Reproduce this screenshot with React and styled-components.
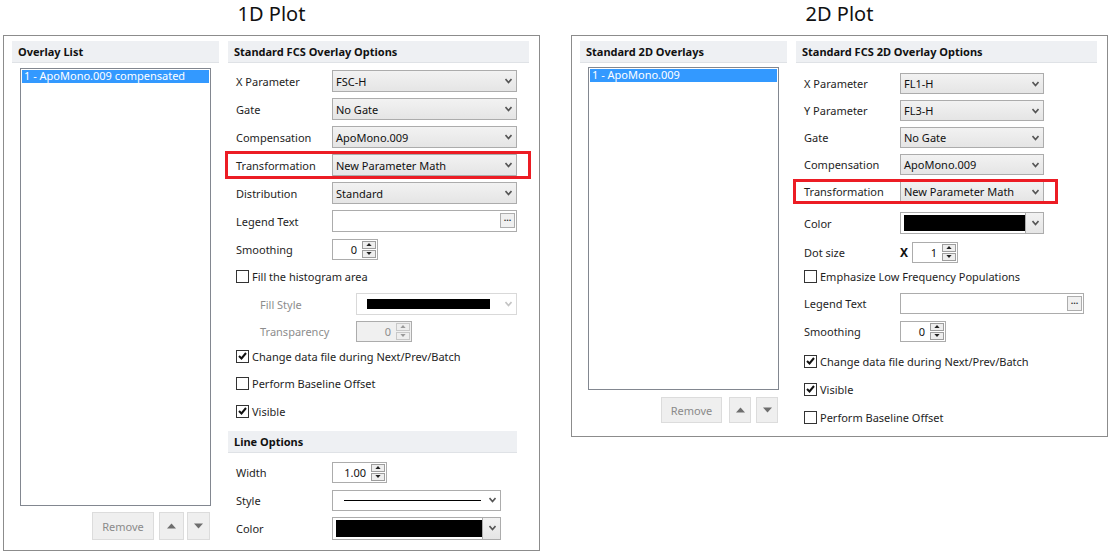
import React from "react";
import styled, { createGlobalStyle } from "styled-components";

const Global = createGlobalStyle`
  html, body { margin: 0; padding: 0; background: #fff; }
  body { font-family: "Noto Sans", "Open Sans", sans-serif; font-size: 11px; color: #1e1e1e; }
`;

const Page = styled.div`
  display: flex;
  gap: 31px;
  padding-left: 3px;
  width: 1111px;
  height: 555px;
  overflow: hidden;
`;

const Column = styled.div`
  display: flex;
  flex-direction: column;
  width: 537px;
`;

const PlotTitle = styled.div`
  height: 35px;
  font-size: 20px;
  line-height: 28px;
  text-align: center;
  color: #111;
`;

const Panel = styled.div`
  border: 1px solid #8c8c8c;
  display: flex;
  gap: 9px;
  padding: 5px 9px ${(p) => p.$padBottom}px 8px;
`;

const ListColumn = styled.div`
  width: 207px;
  display: flex;
  flex-direction: column;
`;

const OptionsColumn = styled.div`
  width: 301px;
  display: flex;
  flex-direction: column;
`;

const SectionHeader = styled.div`
  height: ${(p) => p.$h || 22}px;
  width: ${(p) => p.$w || "auto"};
  margin-top: ${(p) => p.$mt || 0}px;
  box-sizing: border-box;
  background: #eef0f3;
  border-bottom: 1px solid #dfe2e6;
  font-weight: bold;
  display: flex;
  align-items: center;
  padding-left: 6px;
  color: #111;
`;

const ListBox = styled.div`
  margin: ${(p) => p.$mt}px 8px 0 8px;
  height: ${(p) => p.$h}px;
  box-sizing: border-box;
  border: 1px solid #828790;
  padding: 1px;
`;

const ListItem = styled.div`
  background: #3399ff;
  color: #fff;
  height: 13px;
  line-height: 12px;
  padding-left: 2px;
  white-space: nowrap;
`;

const ButtonBar = styled.div`
  display: flex;
  justify-content: flex-end;
  gap: ${(p) => p.$gap}px;
  margin-top: ${(p) => p.$mt}px;
  padding-right: 9px;
`;

const FlatButton = styled.div`
  width: ${(p) => p.$w}px;
  height: ${(p) => p.$h}px;
  box-sizing: border-box;
  background: #efefef;
  border: 1px solid #dcdcdc;
  color: #8a8a8a;
  display: flex;
  align-items: center;
  justify-content: center;
  margin-right: ${(p) => p.$mr || 0}px;
`;

const Row = styled.div`
  position: relative;
  display: flex;
  align-items: center;
  height: ${(p) => p.$h || 28}px;
  margin-top: ${(p) => p.$mt || 0}px;
  padding-left: ${(p) => p.$indent || 8}px;
  ${(p) =>
    p.$mark &&
    `
    &::after {
      content: "";
      position: absolute;
      left: -3px;
      right: ${p.$mark.right}px;
      top: ${p.$mark.v}px;
      bottom: ${p.$mark.v}px;
      border: 3px solid #ec1c24;
      pointer-events: none;
    }
  `}
`;

const Label = styled.div`
  width: 96px;
  flex: none;
  color: ${(p) => (p.$disabled ? "#8d8d8d" : "#1e1e1e")};
  white-space: nowrap;
`;

const Select = styled.div`
  position: relative;
  width: ${(p) => p.$w}px;
  height: ${(p) => p.$h || 22}px;
  box-sizing: border-box;
  border: 1px solid ${(p) => (p.$disabled ? "#d9d9d9" : "#acacac")};
  background: ${(p) =>
    p.$plain ? "#fff" : "linear-gradient(#f2f2f2, #e5e5e5)"};
  display: flex;
  align-items: center;
  padding-left: 3px;
  color: #111;
`;

const Arrow = styled.svg`
  position: absolute;
  right: 4px;
  top: 50%;
  margin-top: -3px;
`;

const ArrowBox = styled.div`
  position: absolute;
  right: 0;
  top: 0;
  bottom: 0;
  width: 17px;
  border-left: 1px solid #acacac;
  background: linear-gradient(#f2f2f2, #e5e5e5);
`;

const Swatch = styled.div`
  height: ${(p) => p.$h}px;
  width: ${(p) => p.$w}px;
  margin-left: ${(p) => p.$ml || 0}px;
  background: #000;
`;

const LineSample = styled.div`
  height: 1px;
  width: 137px;
  margin-left: 8px;
  background: #000;
`;

const TextInput = styled.div`
  position: relative;
  width: ${(p) => p.$w}px;
  height: ${(p) => p.$h || 22}px;
  box-sizing: border-box;
  border: 1px solid #acacac;
  background: #fff;
`;

const Ellipsis = styled.div`
  position: absolute;
  right: 1px;
  top: 2px;
  width: 15px;
  height: 15px;
  box-sizing: border-box;
  border: 1px solid #adadad;
  background: #f0f0f0;
  font-size: 9px;
  font-weight: bold;
  line-height: 8px;
  text-align: center;
  color: #333;
`;

const Spin = styled.div`
  position: relative;
  width: ${(p) => p.$w}px;
  height: ${(p) => p.$h || 21}px;
  box-sizing: border-box;
  border: 1px solid #acacac;
  background: ${(p) => (p.$disabled ? "#f0f0f0" : "#fff")};
  color: ${(p) => (p.$disabled ? "#8d8d8d" : "#111")};
  display: flex;
  align-items: center;
  justify-content: flex-end;
  padding-right: 20px;
`;

const SpinButtons = styled.div`
  position: absolute;
  right: 1px;
  top: 1px;
  bottom: 1px;
  width: 14px;
  display: flex;
  flex-direction: column;
  gap: 1px;
`;

const SpinButton = styled.div`
  flex: 1;
  border: 1px solid ${(p) => (p.$disabled ? "#c8c8c8" : "#9d9d9d")};
  background: #eeeeee;
  display: flex;
  align-items: center;
  justify-content: center;
`;

const CheckRow = styled.label`
  display: flex;
  align-items: center;
  gap: 3px;
  white-space: nowrap;
`;

const Box = styled.span`
  width: 13px;
  height: 13px;
  box-sizing: border-box;
  border: 1px solid #333;
  background: #fff;
  display: flex;
  align-items: center;
  justify-content: center;
`;

const XMark = styled.span`
  font-weight: bold;
  font-size: 12px;
  width: 13px;
  margin-right: -1px;
  text-align: left;
  color: #111;
`;

const Chevron = ({ color = "#555" }) => (
  <Arrow width="7" height="6" viewBox="0 0 7 6">
    <path d="M0.5 1 L3.5 4.5 L6.5 1" fill="none" stroke={color} strokeWidth="1.6" />
  </Arrow>
);

const Tri = ({ up, color = "#222", w = 7, h = 4 }) => (
  <svg width={w} height={h} viewBox="0 0 7 4">
    <path d={up ? "M0 4 L3.5 0 L7 4 Z" : "M0 0 L3.5 4 L7 0 Z"} fill={color} />
  </svg>
);

const Dropdown = ({ w, h, children, disabled, plain }) => (
  <Select $w={w} $h={h} $disabled={disabled} $plain={plain}>
    {children}
    <Chevron color={disabled ? "#c4c4c4" : "#555"} />
  </Select>
);

const ColorDropdown = ({ w, h, swatchW }) => (
  <Select $w={w} $h={h} $plain>
    <Swatch $w={swatchW} $h={h - 6} />
    <ArrowBox>
      <Chevron />
    </ArrowBox>
  </Select>
);

const Spinner = ({ w, value, disabled }) => (
  <Spin $w={w} $disabled={disabled}>
    {value}
    <SpinButtons>
      <SpinButton $disabled={disabled}>
        <Tri up color={disabled ? "#9a9a9a" : "#222"} w={6} h={3} />
      </SpinButton>
      <SpinButton $disabled={disabled}>
        <Tri color={disabled ? "#9a9a9a" : "#222"} w={6} h={3} />
      </SpinButton>
    </SpinButtons>
  </Spin>
);

const Check = ({ checked, children }) => (
  <CheckRow>
    <Box>
      {checked && (
        <svg width="9" height="8" viewBox="0 0 9 8">
          <path d="M1 4 L3.5 6.5 L8 1" fill="none" stroke="#111" strokeWidth="2" />
        </svg>
      )}
    </Box>
    {children}
  </CheckRow>
);

const ListButtons = ({ mt, h, removeW, upW, downW, gap }) => (
  <ButtonBar $mt={mt} $gap={gap}>
    <FlatButton $w={removeW} $h={h} $mr={2}>
      Remove
    </FlatButton>
    <FlatButton $w={upW} $h={h}>
      <Tri up color="#6e6e6e" w={9} h={8} />
    </FlatButton>
    <FlatButton $w={downW} $h={h}>
      <Tri color="#6e6e6e" w={9} h={8} />
    </FlatButton>
  </ButtonBar>
);

const Plot1D = () => (
  <Column>
    <PlotTitle>1D Plot</PlotTitle>
    <Panel $padBottom={8}>
      <ListColumn>
        <SectionHeader>Overlay List</SectionHeader>
        <ListBox $mt={5} $h={438}>
          <ListItem>1 - ApoMono.009 compensated</ListItem>
        </ListBox>
        <ListButtons mt={6} h={28} removeW={62} upW={25} downW={23} gap={3} />
      </ListColumn>
      <OptionsColumn>
        <SectionHeader>Standard FCS Overlay Options</SectionHeader>
        <Row $mt={4}>
          <Label>X Parameter</Label>
          <Dropdown w={185}>FSC-H</Dropdown>
        </Row>
        <Row>
          <Label>Gate</Label>
          <Dropdown w={185}>No Gate</Dropdown>
        </Row>
        <Row>
          <Label>Compensation</Label>
          <Dropdown w={185}>ApoMono.009</Dropdown>
        </Row>
        <Row $mark={{ right: -2, v: 0 }}>
          <Label>Transformation</Label>
          <Dropdown w={185}>New Parameter Math</Dropdown>
        </Row>
        <Row>
          <Label>Distribution</Label>
          <Dropdown w={185}>Standard</Dropdown>
        </Row>
        <Row>
          <Label>Legend Text</Label>
          <TextInput $w={185}>
            <Ellipsis>...</Ellipsis>
          </TextInput>
        </Row>
        <Row>
          <Label>Smoothing</Label>
          <Spinner w={46} value="0" />
        </Row>
        <Row $h={26}>
          <Check>Fill the histogram area</Check>
        </Row>
        <Row $h={30} $indent={32}>
          <Label $disabled>Fill Style</Label>
          <Dropdown w={161} plain disabled>
            <Swatch $w={123} $h={10} $ml={7} />
          </Dropdown>
        </Row>
        <Row $h={24} $indent={32}>
          <Label $disabled>Transparency</Label>
          <Spinner w={56} value="0" disabled />
        </Row>
        <Row $h={26}>
          <Check checked>Change data file during Next/Prev/Batch</Check>
        </Row>
        <Row>
          <Check>Perform Baseline Offset</Check>
        </Row>
        <Row>
          <Check checked>Visible</Check>
        </Row>
        <SectionHeader $mt={6} $h={22} $w="289px">
          Line Options
        </SectionHeader>
        <Row $mt={5}>
          <Label>Width</Label>
          <Spinner w={55} value="1.00" />
        </Row>
        <Row>
          <Label>Style</Label>
          <Dropdown w={169} h={21} plain>
            <LineSample />
          </Dropdown>
        </Row>
        <Row>
          <Label>Color</Label>
          <ColorDropdown w={169} h={23} swatchW={146} />
        </Row>
      </OptionsColumn>
    </Panel>
  </Column>
);

const Plot2D = () => (
  <Column>
    <PlotTitle>2D Plot</PlotTitle>
    <Panel $padBottom={5}>
      <ListColumn>
        <SectionHeader>Standard 2D Overlays</SectionHeader>
        <ListBox $mt={4} $h={323}>
          <ListItem>1 - ApoMono.009</ListItem>
        </ListBox>
        <ListButtons mt={7} h={26} removeW={61} upW={22} downW={22} gap={5} />
      </ListColumn>
      <OptionsColumn>
        <SectionHeader>Standard FCS 2D Overlay Options</SectionHeader>
        <Row $mt={7} $h={27}>
          <Label>X Parameter</Label>
          <Dropdown w={144} h={21}>FL1-H</Dropdown>
        </Row>
        <Row $h={27}>
          <Label>Y Parameter</Label>
          <Dropdown w={144} h={21}>FL3-H</Dropdown>
        </Row>
        <Row $h={27}>
          <Label>Gate</Label>
          <Dropdown w={144} h={21}>No Gate</Dropdown>
        </Row>
        <Row $h={27}>
          <Label>Compensation</Label>
          <Dropdown w={144} h={21}>ApoMono.009</Dropdown>
        </Row>
        <Row $h={27} $mark={{ right: 39, v: 1 }}>
          <Label>Transformation</Label>
          <Dropdown w={144} h={21}>New Parameter Math</Dropdown>
        </Row>
        <Row $mt={4}>
          <Label>Color</Label>
          <ColorDropdown w={144} h={22} swatchW={121} />
        </Row>
        <Row $mt={1}>
          <Label>Dot size</Label>
          <XMark>X</XMark>
          <Spinner w={46} value="1" />
        </Row>
        <Row $h={20}>
          <Check>Emphasize Low Frequency Populations</Check>
        </Row>
        <Row $mt={3}>
          <Label>Legend Text</Label>
          <TextInput $w={184} $h={21}>
            <Ellipsis>...</Ellipsis>
          </TextInput>
        </Row>
        <Row>
          <Label>Smoothing</Label>
          <Spinner w={46} value="0" />
        </Row>
        <Row $mt={2}>
          <Check checked>Change data file during Next/Prev/Batch</Check>
        </Row>
        <Row>
          <Check checked>Visible</Check>
        </Row>
        <Row>
          <Check>Perform Baseline Offset</Check>
        </Row>
      </OptionsColumn>
    </Panel>
  </Column>
);

export default function App() {
  return (
    <>
      <Global />
      <Page>
        <Plot1D />
        <Plot2D />
      </Page>
    </>
  );
}
